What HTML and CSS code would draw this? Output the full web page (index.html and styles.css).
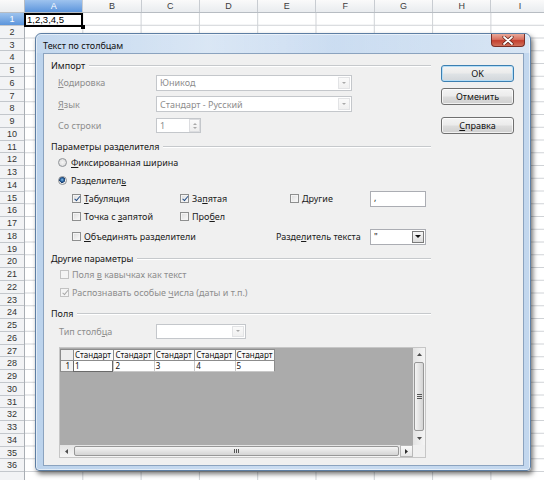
FILE: index.html
```html
<!DOCTYPE html>
<html>
<head>
<meta charset="utf-8">
<link rel="stylesheet" href="styles.css">
</head>
<body>
<div class="sheet">
  <div class="colhead">
    <div class="corner"></div>
    <div class="ch sel">A</div><div class="ch">B</div><div class="ch">C</div><div class="ch">D</div><div class="ch">E</div><div class="ch">F</div><div class="ch">G</div><div class="ch">H</div><div class="ch">I</div>
  </div>
  <div class="sbody">
    <div class="rowhead">
      <div class="rh sel">1</div><div class="rh">2</div><div class="rh">3</div><div class="rh">4</div><div class="rh">5</div><div class="rh">6</div><div class="rh">7</div><div class="rh">8</div><div class="rh">9</div><div class="rh">10</div>
      <div class="rh">11</div><div class="rh">12</div><div class="rh">13</div><div class="rh">14</div><div class="rh">15</div><div class="rh">16</div><div class="rh">17</div><div class="rh">18</div><div class="rh">19</div><div class="rh">20</div>
      <div class="rh">21</div><div class="rh">22</div><div class="rh">23</div><div class="rh">24</div><div class="rh">25</div><div class="rh">26</div><div class="rh">27</div><div class="rh">28</div><div class="rh">29</div><div class="rh">30</div>
      <div class="rh">31</div><div class="rh">32</div><div class="rh">33</div><div class="rh">34</div><div class="rh">35</div><div class="rh">36</div><div class="rh"></div>
    </div>
    <div class="cells">
      <div class="a1">1,2,3,4,5<span class="handle"></span></div>
    </div>
  </div>
</div>

<div class="dialog">
  <div class="titlebar">
    <span class="title">Текст по столбцам</span>
    <div class="close"><svg width="12" height="9" viewBox="0 0 12 9"><path d="M2 1 L10 8 M10 1 L2 8" stroke="#5a2018" stroke-width="3.2" stroke-linecap="round"/><path d="M2 1 L10 8 M10 1 L2 8" stroke="#ffffff" stroke-width="1.8" stroke-linecap="round"/></svg></div>
  </div>
  <div class="client">
    <div class="main">
      <div class="hd"><span>Импорт</span><i></i></div>
      <div class="frow"><span class="lbl dis"><u>К</u>одировка</span><div class="combo dis w196"><span>Юникод</span><b class="arr"><em></em></b></div></div>
      <div class="frow"><span class="lbl dis"><u>Я</u>зык</span><div class="combo dis w196"><span>Стандарт - Русский</span><b class="arr"><em></em></b></div></div>
      <div class="frow"><span class="lbl dis">Со строки</span><div class="spin dis"><span>1</span><b class="spbtn"><em class="up"></em><em class="dn"></em></b></div></div>

      <div class="hd hd-sep"><span>Параметры разделителя</span><i></i></div>
      <div class="rrow"><span class="radio"></span><span><u>Ф</u>иксированная ширина</span></div>
      <div class="rrow"><span class="radio on"></span><span>Разделител<u>ь</u></span></div>
      <div class="crow">
        <div class="ci"><span class="cb on"></span><span><u>Т</u>абуляция</span></div>
        <div class="ci"><span class="cb on"></span><span>За<u>п</u>ятая</span></div>
        <div class="ci"><span class="cb"></span><span>Другие</span></div>
        <div class="edit">,</div>
      </div>
      <div class="crow">
        <div class="ci"><span class="cb"></span><span>Точка с <u>з</u>апятой</span></div>
        <div class="ci"><span class="cb"></span><span>Про<u>б</u>ел</span></div>
      </div>
      <div class="crow tall">
        <div class="ci wide"><span class="cb"></span><span><u>О</u>бъединять разделители</span></div>
        <div class="tlbl">Разде<u>л</u>итель текста</div>
        <div class="combo act w56"><span>"</span><b class="arr dark"><em></em></b></div>
      </div>

      <div class="hd hd-oth"><span>Другие параметры</span><i></i></div>
      <div class="orow dis"><span class="cb dis"></span><span>Поля <u>в</u> кавычках как текст</span></div>
      <div class="orow dis"><span class="cb dis on"></span><span>Распознавать особые <u>ч</u>исла (даты и т.п.)</span></div>

      <div class="hd hd-fld"><span>Поля</span><i></i></div>
      <div class="trow"><span class="lbl dis">Тип столб<u>ц</u>а</span><div class="combo dis w90"><span></span><b class="arr"><em></em></b></div></div>

      <div class="grid">
        <div class="gtop">
          <div class="gdata">
            <div class="grow ghead">
              <div class="gcorner0"></div>
              <div class="gc">Стандарт</div><div class="gc">Стандарт</div><div class="gc">Стандарт</div><div class="gc">Стандарт</div><div class="gc">Стандарт</div>
            </div>
            <div class="grow gline">
              <div class="grh">1</div>
              <div class="gc focus">1</div><div class="gc">2</div><div class="gc">3</div><div class="gc">4</div><div class="gc">5</div>
            </div>
          </div>
          <div class="vscroll">
            <div class="sarr"><svg width="5" height="3" viewBox="0 0 5 3"><path d="M0 3 L2.5 0 L5 3Z" fill="#4d4d4d"/></svg></div>
            <div class="vthumb"><span class="grip-h"></span></div>
            <div class="sarr"><svg width="5" height="3" viewBox="0 0 5 3"><path d="M0 0 L2.5 3 L5 0Z" fill="#4d4d4d"/></svg></div>
          </div>
        </div>
        <div class="gbottom">
          <div class="hscroll">
            <div class="harr"><svg width="3" height="5" viewBox="0 0 3 5"><path d="M3 0 L0 2.5 L3 5Z" fill="#4d4d4d"/></svg></div>
            <div class="hthumb"><span class="grip-v"></span></div>
            <div class="harr btnish"><svg width="3" height="5" viewBox="0 0 3 5"><path d="M0 0 L3 2.5 L0 5Z" fill="#2d2d2d"/></svg></div>
          </div>
          <div class="gcorner"></div>
        </div>
      </div>
    </div>
    <div class="buttons">
      <div class="btn def">OK</div>
      <div class="btn">Отменить</div>
      <div class="btn gap"><span><u>С</u>правка</span></div>
    </div>
  </div>
</div>
</body>
</html>
```

FILE: styles.css
```css
html, body {
  margin: 0;
  padding: 0;
  width: 544px;
  height: 480px;
  overflow: hidden;
  background: #ffffff;
  font-family: "Noto Sans", "Liberation Sans", sans-serif;
}
u { text-decoration: underline; text-underline-offset: 1px; }

/* ---------- spreadsheet ---------- */
.sheet {
  display: flex;
  flex-direction: column;
  width: 544px;
  height: 480px;
  font-family: "Liberation Sans", Arial, sans-serif;
}
.colhead {
  display: flex;
  height: 13px;
  flex: none;
  background: linear-gradient(#fafafa, #e9ecef);
  border-bottom: 1px solid #b7bcc2;
  box-sizing: border-box;
}
.corner {
  width: 25px;
  flex: none;
  box-sizing: border-box;
  border-right: 1px solid #b7bcc2;
}
.ch {
  width: 58.3px;
  flex: none;
  box-sizing: border-box;
  border-right: 1px solid #c8ccd1;
  font-size: 9px;
  color: #3c3c3c;
  text-align: center;
  line-height: 12px;
}
.ch.sel, .rh.sel {
  background: linear-gradient(#9ec3ee, #5c95dc);
  color: #ffffff;
}
.sbody {
  display: flex;
  flex: 1;
}
.rowhead {
  width: 25px;
  flex: none;
  display: flex;
  flex-direction: column;
  border-right: 1px solid #a9aeb4;
  box-sizing: border-box;
  background: #f2f3f5;
}
.rh {
  height: 12.75px;
  flex: none;
  box-sizing: border-box;
  border-bottom: 1px solid #c3c7cc;
  font-size: 9px;
  color: #333333;
  text-align: center;
  line-height: 12px;
}
.cells {
  flex: 1;
  position: relative;
  background-image:
    linear-gradient(to right, transparent 57.3px, #cfd2d6 57.3px),
    linear-gradient(to bottom, transparent 11.75px, #cfd2d6 11.75px);
  background-size: 58.3px 100%, 100% 12.75px;
}
.a1 {
  width: 59px;
  height: 14px;
  margin-left: -1px;
  margin-top: -0.5px;
  box-sizing: border-box;
  border: 2px solid #000000;
  font-size: 9.5px;
  line-height: 10px;
  padding-left: 1px;
  color: #000;
  position: relative;
}
.handle {
  position: absolute;
  right: -4px;
  bottom: -4px;
  width: 4px;
  height: 4px;
  background: #000;
}

/* ---------- dialog ---------- */
.dialog {
  position: absolute;
  left: 35px;
  top: 33px;
  width: 496px;
  height: 438px;
  box-sizing: border-box;
  border: 1px solid #5d7ea3;
  border-radius: 6px 6px 4px 4px;
  background: linear-gradient(to right, #bcd3ec, #cadcf1 50%, #c2d7ee);
  box-shadow: 2px 3px 5px rgba(0, 0, 0, 0.55), inset 0 0 0 1px rgba(255,255,255,0.55);
  display: flex;
  flex-direction: column;
  font-size: 9px;
  color: #1b1b1b;
}
.titlebar {
  height: 19px;
  flex: none;
  display: flex;
  align-items: flex-start;
  background: linear-gradient(to right, rgba(255,255,255,0.1), rgba(255,255,255,0.35) 35%, rgba(255,255,255,0.05) 60%, rgba(255,255,255,0.35));
  border-radius: 5px 5px 0 0;
}
.title {
  margin-left: 7px;
  margin-top: 6px;
  line-height: 11px;
  font-size: 9px;
  color: #101010;
}
.close {
  margin-left: auto;
  margin-right: 5px;
  width: 34px;
  height: 13px;
  box-sizing: border-box;
  border: 1px solid #7a2f26;
  border-top: none;
  border-radius: 0 0 4px 4px;
  background: linear-gradient(#e9a999, #d9705f 45%, #c4402f 55%, #d0705a);
  display: flex;
  align-items: center;
  justify-content: center;
}
.client {
  flex: 1;
  margin: 0 6px 4px 7px;
  border: 1px solid #8ba3bf;
  background: #f0f0f0;
  display: flex;
  padding: 4px 0 0 7px;
}
.main {
  width: 380px;
  flex: none;
  display: flex;
  flex-direction: column;
}
.buttons {
  width: 73px;
  margin-left: 10px;
  margin-top: 7px;
  display: flex;
  flex-direction: column;
  gap: 6px;
}
.btn {
  height: 17px;
  box-sizing: border-box;
  border: 1px solid #707070;
  border-radius: 3px;
  background: linear-gradient(#f4f4f4, #ebebeb 48%, #dddddd 52%, #cfcfcf);
  box-shadow: inset 0 0 0 1px rgba(255,255,255,0.7);
  display: flex;
  align-items: center;
  justify-content: center;
  font-size: 9px;
  color: #111;
}
.btn.def {
  border-color: #3c7fb1;
  box-shadow: inset 0 0 0 1px #b6def7;
  background: linear-gradient(#f4f4f4, #ebebeb 48%, #dfe3e6 52%, #d2d6da);
}
.btn.gap { margin-top: 6px; }

/* headings */
.hd {
  height: 14px;
  flex: none;
  display: flex;
  align-items: center;
  gap: 4px;
  color: #151515;
}
.hd i {
  flex: 1;
  height: 1px;
  background: #c6c9cc;
  box-shadow: 0 1px 0 #ffffff;
}
.hd-sep { margin-top: 3px; }
.hd-oth { margin-top: 3.5px; }
.hd-fld { margin-top: 5px; }

.dis { color: #8d8d8d; }

/* import rows */
.frow {
  height: 21.5px;
  flex: none;
  display: flex;
  align-items: center;
  padding-left: 7px;
}
.lbl {
  width: 98px;
  flex: none;
}
.combo {
  height: 16px;
  box-sizing: border-box;
  border: 1px solid #c4c7cb;
  background: #ffffff;
  display: flex;
  align-items: center;
  padding-left: 3px;
}
.combo > span { flex: 1; white-space: nowrap; overflow: hidden; }
.combo.dis { color: #8d8d8d; }
.w196 { width: 196px; }
.w90 { width: 90px; height: 15px; }
.w56 { width: 56px; }
.combo.act { border-color: #abadb3; color: #111; }
.arr {
  width: 12px;
  height: 12px;
  margin-right: 1px;
  box-sizing: border-box;
  border: 1px solid #e2e3e5;
  background: linear-gradient(#fafafa, #f0f0f0);
  display: flex;
  align-items: center;
  justify-content: center;
}
.w90 .arr { height: 11px; }
.arr em {
  width: 0;
  height: 0;
  border-left: 2.5px solid transparent;
  border-right: 2.5px solid transparent;
  border-top: 2.5px solid #a9a9a9;
}
.arr.dark {
  border-color: #7a7a7a;
  background: linear-gradient(#f6f6f6, #dcdcdc);
}
.arr.dark em { border-top-color: #111; border-left-width: 3px; border-right-width: 3px; border-top-width: 3px; }

.spin {
  width: 45px;
  height: 15px;
  box-sizing: border-box;
  border: 1px solid #c4c7cb;
  background: #ffffff;
  display: flex;
  align-items: center;
  padding-left: 3px;
}
.spin > span { flex: 1; }
.spbtn {
  width: 11px;
  height: 13px;
  box-sizing: border-box;
  border: 1px solid #dcdde0;
  background: linear-gradient(#fbfbfb, #eeeeee);
  display: flex;
  flex-direction: column;
  align-items: center;
  justify-content: space-around;
  padding: 1px 0;
}
.spbtn .up, .spbtn .dn {
  width: 0; height: 0;
  border-left: 2px solid transparent;
  border-right: 2px solid transparent;
}
.spbtn .up { border-bottom: 2px solid #a9a9a9; }
.spbtn .dn { border-top: 2px solid #a9a9a9; }

/* radios & checkboxes */
.rrow {
  height: 18px;
  flex: none;
  display: flex;
  align-items: center;
  padding-left: 7px;
  gap: 4px;
}
.radio {
  width: 9px;
  height: 9px;
  box-sizing: border-box;
  border-radius: 50%;
  border: 1px solid #8f9397;
  background: radial-gradient(circle at 50% 50%, #f4f4f4 0, #d8d8d8 100%);
  flex: none;
}
.radio.on {
  background: radial-gradient(circle at 45% 40%, #8ec0e8 0, #2f6aa6 1.6px, #1d3f6e 2.8px, #f2f2f2 3.2px, #dcdcdc 100%);
}
.crow {
  height: 18px;
  flex: none;
  display: flex;
  align-items: center;
  padding-left: 21px;
}
.crow.tall { height: 22px; }
.ci {
  width: 108px;
  flex: none;
  display: flex;
  align-items: center;
  gap: 3px;
}
.ci:nth-child(2) { width: 110px; }
.ci:nth-child(3) { width: 80px; }
.ci.wide { width: 204px; }
.tlbl { width: 94px; flex: none; }
.cb {
  width: 9px;
  height: 9px;
  box-sizing: border-box;
  border: 1px solid #8e8f8f;
  background: linear-gradient(135deg, #dcdcdc, #fbfbfb);
  box-shadow: inset 0 0 0 1px #f4f4f4;
  flex: none;
  position: relative;
}
.cb.on::after {
  content: "";
  position: absolute;
  left: 2.5px;
  top: 0px;
  width: 2px;
  height: 4.5px;
  border-right: 1.3px solid #234c84;
  border-bottom: 1.3px solid #234c84;
  transform: rotate(40deg);
}
.cb.dis { border-color: #c2c2c2; background: #f4f4f4; }
.cb.dis.on::after { border-color: #a8a8a8; }
.edit {
  width: 56px;
  height: 16px;
  box-sizing: border-box;
  border: 1px solid #abadb3;
  background: #ffffff;
  padding-left: 3px;
  line-height: 12px;
}

.orow {
  height: 18px;
  flex: none;
  display: flex;
  align-items: center;
  padding-left: 9px;
  gap: 3px;
}
.trow {
  height: 22px;
  flex: none;
  display: flex;
  align-items: center;
  padding-left: 8px;
}
.trow .lbl { width: 97px; }

/* preview grid */
.grid {
  margin-top: 5px;
  margin-left: 8px;
  width: 367px;
  height: 111px;
  box-sizing: border-box;
  border: 1px solid #c6c6c6;
  display: flex;
  flex-direction: column;
  flex: none;
}
.gtop { display: flex; height: 97px; }
.gdata {
  flex: 1;
  background: #ababab;
  padding-top: 1px;
  display: flex;
  flex-direction: column;
  font-size: 8px;
  color: #111;
}
.grow { display: flex; }
.ghead { height: 12px; }
.gline { height: 11px; }
.gcorner0 {
  width: 13px;
  box-sizing: border-box;
  background: #eeeeee;
  border: 1px solid #8c8c8c;
  border-right: none;
}
.grh {
  width: 13px;
  box-sizing: border-box;
  background: #f2f2f2;
  border-left: 1px solid #8c8c8c;
  border-bottom: 1px solid #8c8c8c;
  text-align: right;
  padding-right: 3px;
  line-height: 10px;
}
.gc {
  width: 40.4px;
  box-sizing: border-box;
  background: #ffffff;
  border-left: 1px solid #8c8c8c;
  padding-left: 1px;
  line-height: 10px;
  white-space: nowrap;
  overflow: hidden;
}
.ghead .gc {
  border-top: 1px solid #8c8c8c;
  border-bottom: 1px solid #8c8c8c;
  background: #fafafa;
}
.ghead .gc:last-child, .gline .gc:last-child { border-right: 1px solid #8c8c8c; }
.gline .gc { border-left-color: #c8c8c8; border-bottom: 1px solid #c8c8c8; }
.gline .gc.focus { border: 1px solid #6a6a6a; border-top: none; }

.vscroll {
  width: 12px;
  flex: none;
  background: linear-gradient(to right, #e3e3e3, #f5f5f5);
  display: flex;
  flex-direction: column;
  align-items: center;
}
.sarr {
  height: 13px;
  width: 12px;
  flex: none;
  display: flex;
  align-items: center;
  justify-content: center;
}
.vthumb {
  flex: 1;
  width: 10px;
  margin: 1px 0;
  box-sizing: border-box;
  border: 1px solid #979797;
  border-radius: 2px;
  background: linear-gradient(to right, #f4f4f4, #e4e4e4 50%, #d4d4d4);
  display: flex;
  align-items: center;
  justify-content: center;
}
.grip-h {
  width: 5px;
  height: 5px;
  background: repeating-linear-gradient(to bottom, #555 0 1px, transparent 1px 2px);
}
.gbottom { display: flex; height: 12px; }
.hscroll {
  flex: 1;
  display: flex;
  background: linear-gradient(#e3e3e3, #f5f5f5);
}
.harr {
  width: 13px;
  flex: none;
  display: flex;
  align-items: center;
  justify-content: center;
}
.harr.btnish {
  box-sizing: border-box;
  border: 1px solid #b8b8b8;
  background: linear-gradient(#fafafa, #e6e6e6);
}
.hthumb {
  flex: 1;
  margin: 1px 1px 1px 1px;
  box-sizing: border-box;
  border: 1px solid #979797;
  border-radius: 2px;
  background: linear-gradient(#f4f4f4, #e4e4e4 50%, #d4d4d4);
  display: flex;
  align-items: center;
  justify-content: center;
}
.grip-v {
  width: 5px;
  height: 4px;
  background: repeating-linear-gradient(to right, #555 0 1px, transparent 1px 2px);
}
.gcorner { width: 12px; flex: none; background: #f0f0f0; }
```
